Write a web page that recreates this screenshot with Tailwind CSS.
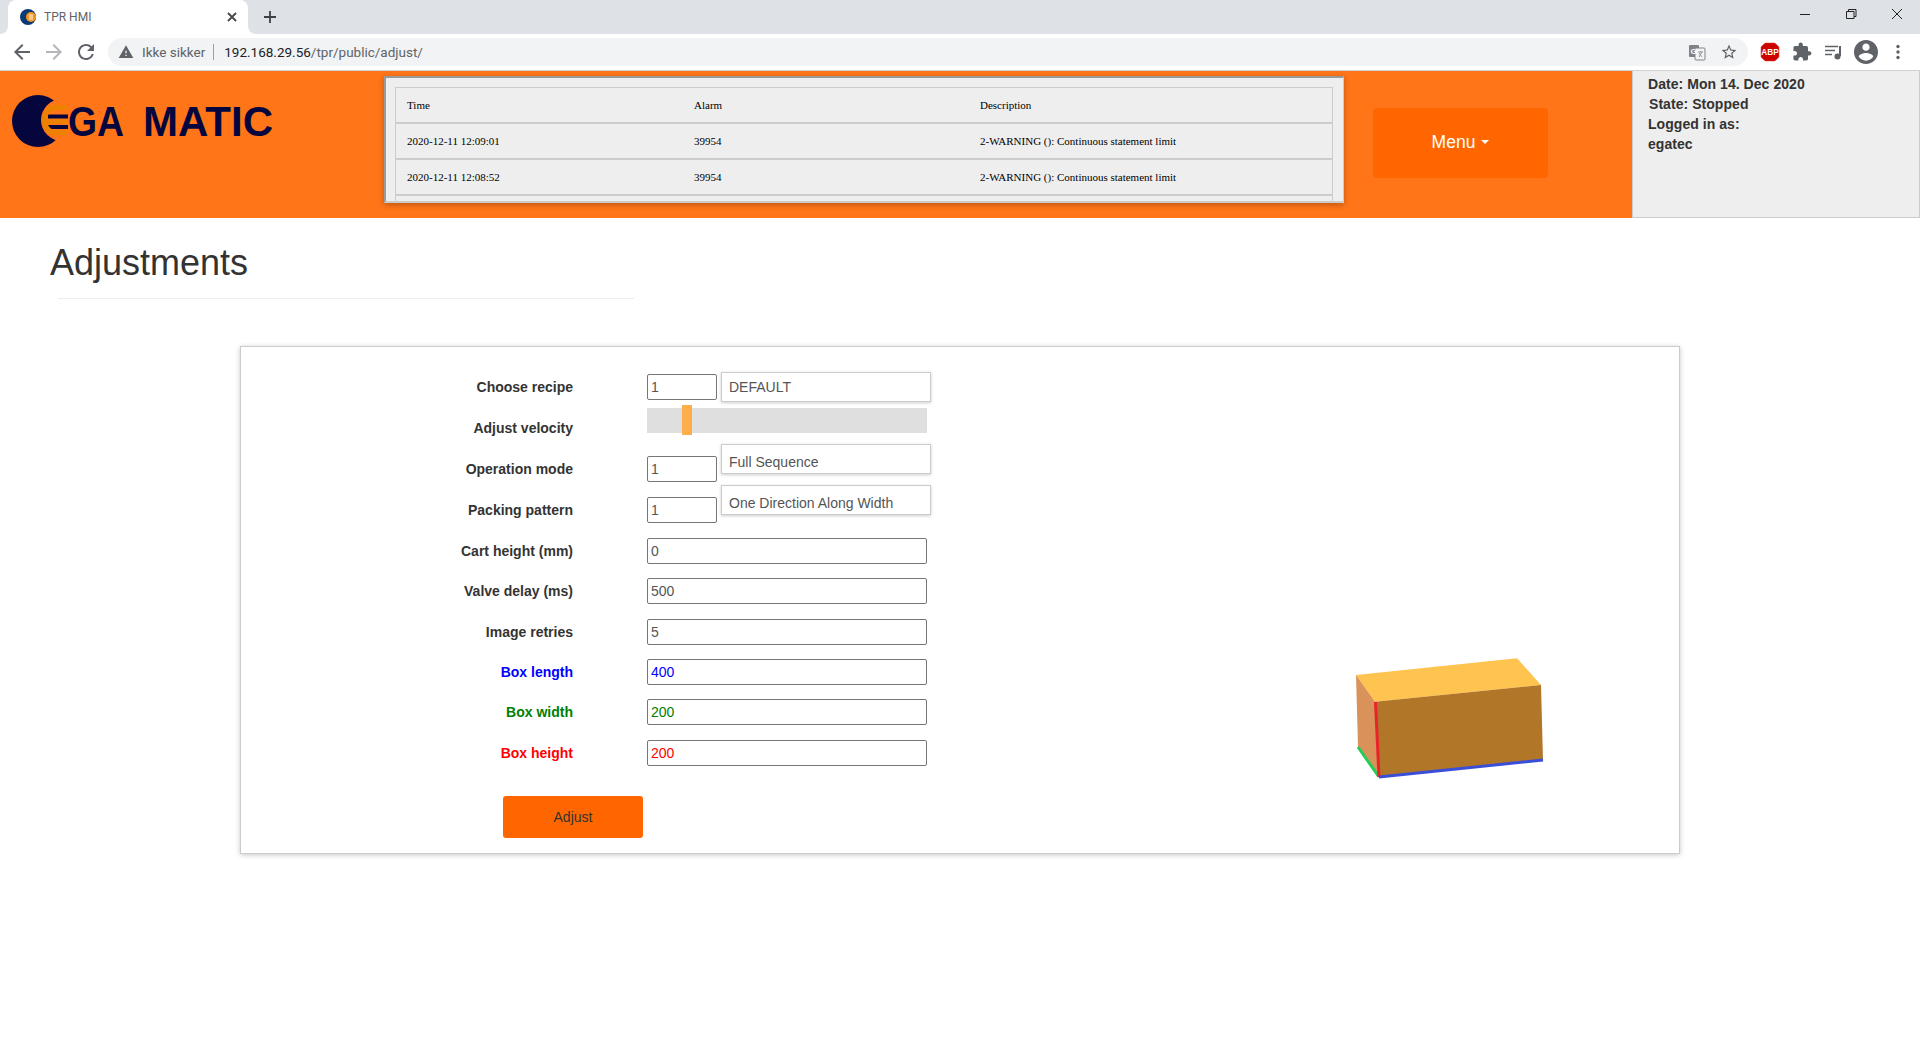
<!DOCTYPE html>
<html lang="en">
<head>
    <meta charset="UTF-8">
    <title>TPR HMI</title>
    <script src="https://cdn.jsdelivr.net/npm/@tailwindcss/browser@4"></script>
</head>
<body class="bg-white h-screen overflow-hidden font-['Liberation_Sans',sans-serif] text-sm text-[#333]">
    <!-- browser tab strip -->
    <div class="h-[34px] bg-[#dee1e6] flex pl-[8px] font-['Roboto',sans-serif]">
        <div class="relative w-[240px] h-[34px] bg-white rounded-t-lg flex items-center pl-[12px] pr-[8px]">
            <div class="absolute left-[-8px] bottom-0 w-[8px] h-[8px] bg-white"><div class="w-[8px] h-[8px] bg-[#dee1e6] rounded-br-lg"></div></div>
            <div class="absolute right-[-8px] bottom-0 w-[8px] h-[8px] bg-white"><div class="w-[8px] h-[8px] bg-[#dee1e6] rounded-bl-lg"></div></div>
            <svg class="w-[16px] h-[16px]" viewBox="0 0 16 16">
                <circle cx="8" cy="8" r="8" fill="#0b3a75"/>
                <circle cx="11" cy="8" r="5" fill="#f7941d"/>
                <path d="M9 6h4M9 8h4M9 10h4" stroke="#fff" stroke-width="1"/>
            </svg>
            <span class="ml-[8px] text-xs text-[#5f6368] flex-1">TPR HMI</span>
            <svg class="w-[16px] h-[16px]" viewBox="0 0 16 16" stroke="#45484c" stroke-width="1.8"><path d="M4 4l8 8M12 4l-8 8"/></svg>
        </div>
        <div class="ml-[14px] flex items-center">
            <svg class="w-[16px] h-[16px]" viewBox="0 0 16 16" stroke="#3c4043" stroke-width="1.8"><path d="M8 2v12M2 8h12"/></svg>
        </div>
        <div class="ml-auto flex items-start">
            <svg class="w-[46px] h-[28px]" viewBox="0 0 46 28" stroke="#222" fill="none"><path d="M18 14.5h10"/></svg>
            <svg class="w-[46px] h-[28px]" viewBox="0 0 46 28" stroke="#222" fill="none"><path d="M18.5 11.5h7.5v7h-7.5zM20.5 11.5v-2h7.5v7h-2"/></svg>
            <svg class="w-[46px] h-[28px]" viewBox="0 0 46 28" stroke="#222" fill="none"><path d="M18 9l10 10M28 9l-10 10"/></svg>
        </div>
    </div>

    <!-- browser toolbar -->
    <div class="h-[37px] bg-white border-b border-[#d0d2d6] flex items-start pt-[4px] font-['Roboto',sans-serif]">
        <div class="flex items-center h-[28px] pl-[10px]">
            <svg class="w-[24px] h-[24px]" viewBox="0 0 24 24" fill="#5f6368"><path d="M20 11H7.83l5.59-5.59L12 4l-8 8 8 8 1.41-1.41L7.83 13H20v-2z"/></svg>
            <svg class="ml-[8px] w-[24px] h-[24px]" viewBox="0 0 24 24" fill="#b4b6b9"><path d="M12 4l-1.41 1.41L16.17 11H4v2h12.17l-5.58 5.59L12 20l8-8z"/></svg>
            <svg class="ml-[8px] w-[24px] h-[24px]" viewBox="0 0 24 24" fill="#5f6368"><path d="M17.65 6.35A7.958 7.958 0 0012 4c-4.42 0-7.99 3.58-7.99 8s3.57 8 7.99 8c3.73 0 6.84-2.55 7.73-6h-2.08A5.99 5.99 0 0112 18c-3.31 0-6-2.69-6-6s2.69-6 6-6c1.66 0 3.14.69 4.22 1.78L13 11h7V4l-2.35 2.35z"/></svg>
        </div>
        <div class="ml-[10px] w-[1640px] h-[28px] bg-[#f1f3f4] rounded-full flex items-center pl-[10px] pr-[10px]">
            <svg class="w-[16px] h-[16px]" viewBox="0 0 24 24" fill="#5f6368"><path d="M1 21h22L12 2 1 21zm12-3h-2v-2h2v2zm0-4h-2v-4h2v4z"/></svg>
            <span class="ml-[8px] pt-px text-[13.5px] text-[#5f6368]">Ikke sikker</span>
            <span class="ml-[8px] w-px h-[16px] bg-[#9aa0a6]"></span>
            <span class="ml-[10px] pt-px text-[13.5px] text-[#202124]">192.168.29.56<span class="text-[#5f6368]">/tpr/public/adjust/</span></span>
            <svg class="ml-auto w-[18px] h-[18px]" viewBox="0 0 18 18">
                <rect x="1" y="2" width="10" height="12" rx="1" fill="#7f8387"/>
                <rect x="7" y="5" width="10" height="12" rx="1" fill="#f1f3f4" stroke="#7f8387"/>
                <text x="2.500" y="11" font-size="8" font-weight="700" fill="#fff" font-family="Liberation Sans">G</text>
                <path d="M10 9h5M12.500 8v1M11 14l3-5M11 10l3 4" stroke="#7f8387" stroke-width="0.8" fill="none"/>
            </svg>
            <svg class="ml-[14px] w-[18px] h-[18px]" viewBox="0 0 24 24" fill="#5f6368"><path d="M22 9.24l-7.19-.62L12 2 9.19 8.63 2 9.24l5.46 4.73L5.82 21 12 17.27 18.18 21l-1.63-7.03L22 9.24zM12 15.4l-3.76 2.27 1-4.28-3.32-2.88 4.38-.38L12 6.1l1.71 4.04 4.38.38-3.32 2.88 1 4.28L12 15.4z"/></svg>
        </div>
        <div class="flex items-center h-[28px] ml-[10px]">
            <svg class="w-[24px] h-[24px]" viewBox="1 1 22 22">
                <path d="M7.500 4h9L20 7.500v9L16.500 20h-9L4 16.500v-9z" fill="#cc0000" stroke="#cc0000" stroke-width="0.8"/>
                <text x="12" y="14.800" text-anchor="middle" font-size="7.500" font-weight="700" fill="#fff" font-family="Liberation Sans">ABP</text>
            </svg>
            <svg class="ml-[8px] w-[24px] h-[24px]" viewBox="-2 -2 28 28" fill="#5f6368"><path d="M20.5 11H19V7c0-1.100-.9-2-2-2h-4V3.500C13 2.120 11.880 1 10.500 1S8 2.120 8 3.500V5H4c-1.100 0-1.990.9-1.990 2v3.800H3.500c1.490 0 2.700 1.210 2.700 2.700s-1.210 2.700-2.700 2.700H2V20c0 1.100.9 2 2 2h3.800v-1.500c0-1.490 1.210-2.700 2.700-2.700 1.490 0 2.700 1.210 2.700 2.700V22H17c1.100 0 2-.9 2-2v-4h1.500c1.380 0 2.500-1.120 2.500-2.500S21.880 11 20.500 11z"/></svg>
            <svg class="ml-[7px] w-[24px] h-[24px]" viewBox="0 0 24 24" fill="none" stroke="#5f6368" stroke-width="1.500"><path d="M4 6.500h13M4 10.500h10M4 14.500h7"/><path d="M19 6v10" stroke-width="2"/><circle cx="16.500" cy="16.500" r="2.300" fill="#5f6368"/></svg>
            <svg class="ml-[9px] w-[24px] h-[24px]" viewBox="2 2 20 20" fill="#5f6368"><path d="M12 2C6.480 2 2 6.480 2 12s4.480 10 10 10 10-4.480 10-10S17.520 2 12 2zm0 3c1.660 0 3 1.340 3 3s-1.340 3-3 3-3-1.340-3-3 1.340-3 3-3zm0 14.200c-2.500 0-4.710-1.280-6-3.220.03-1.990 4-3.080 6-3.080 1.990 0 5.970 1.090 6 3.080-1.290 1.940-3.500 3.220-6 3.220z"/></svg>
            <svg class="ml-[8px] w-[24px] h-[24px]" viewBox="0 0 24 24" fill="#5f6368"><circle cx="12" cy="6.500" r="1.700"/><circle cx="12" cy="12" r="1.700"/><circle cx="12" cy="17.500" r="1.700"/></svg>
        </div>
    </div>

    <!-- app header -->
    <header class="h-[147px] bg-[#ff7518] flex">
        <div class="w-[384px] shrink-0">
            <svg class="mt-[24px] ml-[12px] w-[280px] h-[54px]" viewBox="0 0 280 54">
                <circle cx="26" cy="26" r="26" fill="#06063f"/>
                <circle cx="50" cy="25" r="21" fill="#ff7518"/>
                <path d="M36 21.500H56M36 32H56" stroke="#06063f" stroke-width="4"/>
                <path d="M56 12.500H42A10 12.500 0 0 0 32.500 25A10 12.500 0 0 0 42 37.500H56" fill="none" stroke="#ee8200" stroke-width="5"/>
                <path d="M36 26.700H56" stroke="#ee8200" stroke-width="4.500"/>
                <text x="56" y="41" font-family="Liberation Sans" font-weight="700" font-size="43" fill="#06063f" textLength="56" lengthAdjust="spacingAndGlyphs">GA</text>
                <text x="131" y="41" font-family="Liberation Sans" font-weight="700" font-size="43" fill="#06063f" textLength="130" lengthAdjust="spacingAndGlyphs">MATIC</text>
            </svg>
        </div>
        <div class="mt-[5px] w-[960px] h-[127px] bg-[#eee] border-t-2 border-l-2 border-r border-b-2 border-t-[#999] border-l-[#999] border-r-[#ccc] border-b-[#ccc] shadow-[0_2px_6px_rgba(0,0,0,0.25)] pl-[9px] pt-[9px] font-['Liberation_Serif',serif] text-[11px] text-black">
            <div class="w-[938px] h-[114px] overflow-hidden border-x border-t border-[#ccc]">
                <table class="w-full table-fixed border-separate border-spacing-0">
                    <colgroup><col class="w-[298px]"><col class="w-[286px]"><col></colgroup>
                    <thead>
                        <tr class="h-[36px]">
                            <th class="pl-[11px] pt-[2px] text-left font-normal border-b-2 border-[#ccc]">Time</th>
                            <th class="pt-[2px] text-left font-normal border-b-2 border-[#ccc]">Alarm</th>
                            <th class="pt-[2px] text-left font-normal border-b-2 border-[#ccc]">Description</th>
                        </tr>
                    </thead>
                    <tbody>
                        <tr class="h-[36px]">
                            <td class="pl-[11px] pt-[2px] border-b-2 border-[#ccc]">2020-12-11 12:09:01</td>
                            <td class="pt-[2px] border-b-2 border-[#ccc]">39954</td>
                            <td class="pt-[2px] border-b-2 border-[#ccc]">2-WARNING (): Continuous statement limit</td>
                        </tr>
                        <tr class="h-[36px]">
                            <td class="pl-[11px] pt-[2px] border-b-2 border-[#ccc]">2020-12-11 12:08:52</td>
                            <td class="pt-[2px] border-b-2 border-[#ccc]">39954</td>
                            <td class="pt-[2px] border-b-2 border-[#ccc]">2-WARNING (): Continuous statement limit</td>
                        </tr>
                        <tr class="h-[36px]"><td></td><td></td><td></td></tr>
                    </tbody>
                </table>
            </div>
        </div>
        <button class="ml-[29px] mt-[37px] w-[175px] h-[70px] pb-[2px] bg-[#ff6600] rounded text-white text-[17.500px] flex items-center justify-center">
            Menu
            <span class="ml-[6px] w-0 h-0 border-x-4 border-t-4 border-x-transparent border-t-white"></span>
        </button>
        <div class="ml-auto w-[288px] bg-[#eee] border border-t-0 border-[#ccc] pl-[15px] pt-[3px] font-bold leading-[20px] tracking-[0.05px]">
            <div>Date: Mon 14. Dec 2020</div>
            <div class="pl-px">State: Stopped</div>
            <div>Logged in as:</div>
            <div>egatec</div>
        </div>
    </header>

    <main>
        <h1 class="ml-[50px] mt-[25px] text-[36px] leading-[40px] font-normal">Adjustments</h1>
        <div class="ml-[58px] mt-[15px] w-[576px] h-px bg-[#eee]"></div>

        <!-- adjustment form card -->
        <section class="ml-[240px] mt-[47px] w-[1440px] h-[508px] border border-[#ccc] shadow-[0_1px_5px_rgba(0,0,0,0.22)] flex bg-white">
            <form class="w-[690px] shrink-0 pt-[27px] flex flex-col">
                <div class="h-[26px] flex items-center">
                    <label class="w-[332px] text-right font-bold">Choose recipe</label>
                    <input class="ml-[74px] w-[70px] h-[26px] border border-[#767676] rounded-[2px] pl-[3px] text-[#555]" value="1">
                    <div class="ml-[4px] w-[210px] h-[30px] border border-[#ccc] shadow-[0_1px_3px_rgba(0,0,0,0.2)] pl-[7px] flex items-center text-[#555]">DEFAULT</div>
                </div>
                <div class="mt-[15px] h-[26px] flex items-center">
                    <label class="w-[332px] text-right font-bold">Adjust velocity</label>
                    <div class="relative ml-[74px] mb-[15px] w-[280px] h-[25px] bg-[#dfdfdf]">
                        <div class="absolute left-[35px] top-[-3px] w-[10px] h-[30px] bg-[#ffad4d]"></div>
                    </div>
                </div>
                <div class="mt-[15px] h-[26px] flex items-center">
                    <label class="w-[332px] text-right font-bold">Operation mode</label>
                    <input class="ml-[74px] w-[70px] h-[26px] border border-[#767676] rounded-[2px] pl-[3px] text-[#555]" value="1">
                    <div class="ml-[4px] mb-[20px] w-[210px] h-[30px] border border-[#ccc] shadow-[0_1px_3px_rgba(0,0,0,0.2)] pl-[7px] pt-[6px] flex items-center text-[#555]">Full Sequence</div>
                </div>
                <div class="mt-[15px] h-[26px] flex items-center">
                    <label class="w-[332px] text-right font-bold">Packing pattern</label>
                    <input class="ml-[74px] w-[70px] h-[26px] border border-[#767676] rounded-[2px] pl-[3px] text-[#555]" value="1">
                    <div class="ml-[4px] mb-[20px] w-[210px] h-[30px] border border-[#ccc] shadow-[0_1px_3px_rgba(0,0,0,0.2)] pl-[7px] pt-[6px] flex items-center text-[#555]">One Direction Along Width</div>
                </div>
                <div class="mt-[15px] h-[26px] flex items-center">
                    <label class="w-[332px] text-right font-bold">Cart height (mm)</label>
                    <input class="ml-[74px] w-[280px] h-[26px] border border-[#767676] rounded-[2px] pl-[3px] text-[#555]" value="0">
                </div>
                <div class="mt-[14px] h-[26px] flex items-center">
                    <label class="w-[332px] text-right font-bold">Valve delay (ms)</label>
                    <input class="ml-[74px] w-[280px] h-[26px] border border-[#767676] rounded-[2px] pl-[3px] text-[#555]" value="500">
                </div>
                <div class="mt-[15px] h-[26px] flex items-center">
                    <label class="w-[332px] text-right font-bold">Image retries</label>
                    <input class="ml-[74px] w-[280px] h-[26px] border border-[#767676] rounded-[2px] pl-[3px] text-[#555]" value="5">
                </div>
                <div class="mt-[14px] h-[26px] flex items-center">
                    <label class="w-[332px] text-right font-bold text-[#0000ff]">Box length</label>
                    <input class="ml-[74px] w-[280px] h-[26px] border border-[#767676] rounded-[2px] pl-[3px] text-[#0000ff]" value="400">
                </div>
                <div class="mt-[14px] h-[26px] flex items-center">
                    <label class="w-[332px] text-right font-bold text-[#008000]">Box width</label>
                    <input class="ml-[74px] w-[280px] h-[26px] border border-[#767676] rounded-[2px] pl-[3px] text-[#008000]" value="200">
                </div>
                <div class="mt-[15px] h-[26px] flex items-center">
                    <label class="w-[332px] text-right font-bold text-[#ff0000]">Box height</label>
                    <input class="ml-[74px] w-[280px] h-[26px] border border-[#767676] rounded-[2px] pl-[3px] text-[#ff0000]" value="200">
                </div>
                <button type="button" class="ml-[262px] mt-[30px] w-[140px] h-[42px] bg-[#ff6600] rounded-[3px] text-[#333]">Adjust</button>
            </form>
            <svg class="ml-[419px] mt-[303px] w-[200px] h-[130px] shrink-0" viewBox="1350 650 200 130">
                <polygon points="1356,675 1517,658.300 1541,685 1375,701.700" fill="#ffc34f"/>
                <polygon points="1375,701.700 1541,685 1543,760 1379,777" fill="#b27629"/>
                <polygon points="1356,675 1375,701.700 1379,777 1358,747" fill="#d9935a"/>
                <path d="M1358 747L1379 777" stroke="#22cc55" stroke-width="3"/>
                <path d="M1375.500 702L1379 777" stroke="#e8242a" stroke-width="3"/>
                <path d="M1379 777L1543 760" stroke="#3a4fd8" stroke-width="3"/>
            </svg>
        </section>
    </main>
</body>
</html>
